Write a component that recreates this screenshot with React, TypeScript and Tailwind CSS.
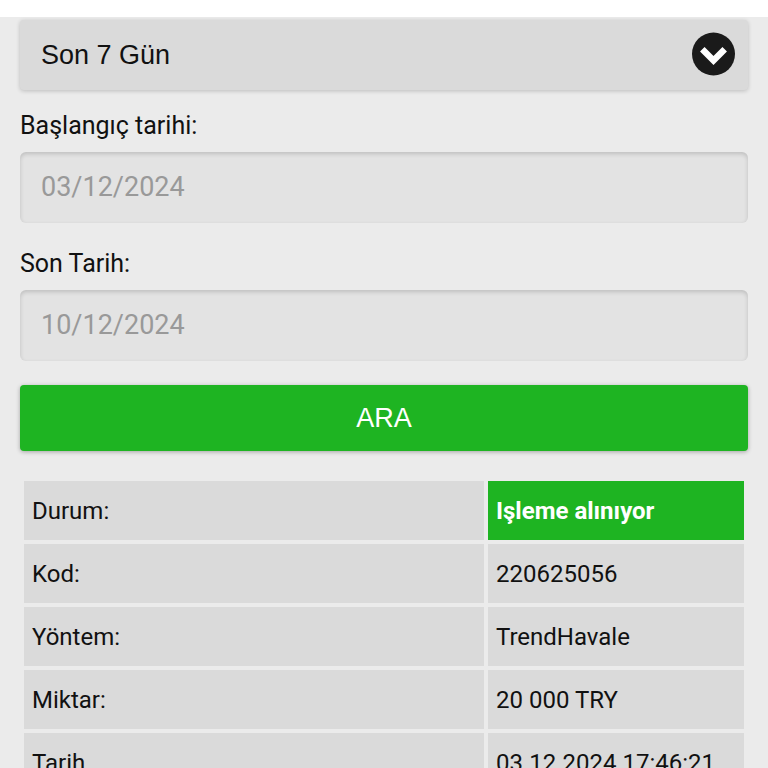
import React from 'react';

const rows = [
  { label: 'Durum:', value: 'Işleme alınıyor', highlight: true },
  { label: 'Kod:', value: '220625056' },
  { label: 'Yöntem:', value: 'TrendHavale' },
  { label: 'Miktar:', value: '20 000 TRY' },
  { label: 'Tarih', value: '03.12.2024 17:46:21' }
];

const dates = [
  { id: 'start', label: 'Başlangıç tarihi:', value: '03/12/2024' },
  { id: 'end', label: 'Son Tarih:', value: '10/12/2024' }
];

export default function App() {
  return (
    <div className="min-h-screen bg-white pt-[17px] font-[Roboto,sans-serif] text-[#111111]">
      <main className="bg-[#ebebeb] px-5 pt-[3px]">
        <div className="relative mb-[19px]">
          <select
            aria-label="Dönem"
            className="block h-[70px] w-full appearance-none rounded bg-[#dadada] px-[21px] font-['Liberation_Sans',sans-serif] text-[27px] shadow-[0_1px_4px_rgba(0,0,0,0.2)]"
          >
            <option>Son 7 Gün</option>
          </select>
          <svg className="pointer-events-none absolute right-3 top-3 h-11 w-11" viewBox="0 0 44 44" fill="none">
            <circle cx="21.5" cy="22" r="21.5" fill="#1a1a1a" />
            <path d="M10.3 17.3l11.2 11.2 11.2-11.2" stroke="#fff" strokeWidth="6.4" />
          </svg>
        </div>

        {dates.map((d) => (
          <div key={d.id} className="mb-6">
            <label htmlFor={d.id} className="block text-[25px] leading-[33px]">{d.label}</label>
            <input
              id={d.id}
              type="text"
              defaultValue={d.value}
              disabled
              className="mt-2.5 block h-[71px] w-full rounded-md bg-[#e3e3e3] px-[21px] pb-0.5 text-[27px] text-[#999999] shadow-[inset_0_2px_4px_rgba(0,0,0,0.16)]"
            />
          </div>
        ))}

        <button
          type="button"
          className="block h-[66px] w-full rounded bg-[#1eb422] font-['Liberation_Sans',sans-serif] text-[27px] text-white shadow-[0_1px_4px_rgba(0,0,0,0.3)]"
        >
          ARA
        </button>

        <table className="mt-[26px] w-full table-fixed border-separate border-spacing-1 text-2xl">
          <tbody>
            {rows.map((r) => (
              <tr key={r.label}>
                <th scope="row" className="h-[59px] bg-[#dadada] px-2 text-left font-normal">
                  {r.label}
                </th>
                <td className={r.highlight ? 'w-64 bg-[#1eb422] px-2 font-bold text-white' : 'w-64 bg-[#dadada] px-2'}>
                  {r.value}
                </td>
              </tr>
            ))}
          </tbody>
        </table>
      </main>
    </div>
  );
}
